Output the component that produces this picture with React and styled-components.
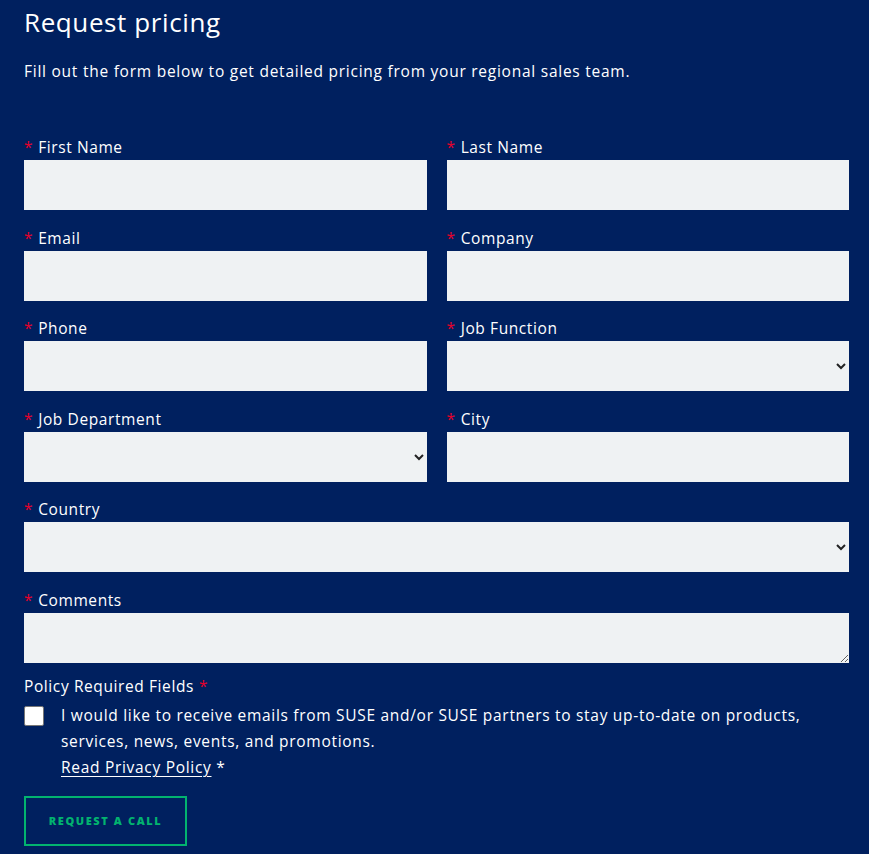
import React from 'react';
import styled, { createGlobalStyle } from 'styled-components';

const GlobalStyle = createGlobalStyle`
  html, body {
    margin: 0;
    padding: 0;
    background: #00205f;
  }
  body {
    font-family: "Open Sans", "Liberation Sans", sans-serif;
    color: #fff;
  }
`;

const Page = styled.div`
  padding: 4px 20px 8px 24px;
`;

const Title = styled.h2`
  margin: 0;
  font-size: 26px;
  font-weight: 500;
  line-height: 36px;
  letter-spacing: 0.6px;
`;

const Intro = styled.p`
  margin: 20px 0 55px;
  font-size: 15.5px;
  line-height: 22px;
  letter-spacing: 0.75px;
`;

const Grid = styled.div`
  display: grid;
  grid-template-columns: 1fr 1fr;
  column-gap: 20px;
  row-gap: 17.6px;
`;

const Field = styled.div`
  display: flex;
  flex-direction: column;
  grid-column: ${(p) => (p.$wide ? '1 / -1' : 'auto')};
`;

const Label = styled.label`
  font-size: 15.5px;
  line-height: 20px;
  margin-bottom: 3px;
  letter-spacing: 0.6px;
`;

const Star = styled.span`
  color: #e4002b;
  margin-right: 5px;
`;

const Input = styled.input`
  box-sizing: border-box;
  height: 50px;
  border: none;
  background: #eff2f3;
  font-size: 15px;
  padding: 0 12px;
  outline: none;
`;

const Select = styled.select`
  box-sizing: border-box;
  height: 50px;
  border: none;
  border-radius: 0;
  background: #eff2f3;
  font-size: 15px;
  padding: 0 8px;
  color: #222;
  outline: none;
`;

const TextArea = styled.textarea`
  box-sizing: border-box;
  height: 50px;
  border: none;
  background: #eff2f3;
  font-size: 15px;
  padding: 8px 12px;
  outline: none;
  display: block;
`;

const PolicyTitle = styled.div`
  margin-top: 12px;
  font-size: 15.5px;
  line-height: 22px;
  letter-spacing: 0.6px;
`;

const PolicyStar = styled.span`
  color: #e4002b;
  margin-left: 5px;
`;

const ConsentRow = styled.div`
  display: flex;
  gap: 17px;
  margin-top: 5px;
`;

const Box = styled.input`
  appearance: none;
  margin: 4px 0 0;
  width: 20px;
  height: 20px;
  flex-shrink: 0;
  background: #fff;
  border: 1px solid #767676;
  border-radius: 2px;
`;

const ConsentText = styled.div`
  font-size: 15.5px;
  line-height: 26px;
  letter-spacing: 0.7px;
`;

const Link = styled.a`
  color: #fff;
  text-decoration: underline;
  text-underline-offset: 3px;
`;

const Button = styled.button`
  margin-top: 16px;
  width: 163px;
  height: 50px;
  background: transparent;
  border: 2px solid #02b36f;
  color: #02b36f;
  font-family: "Open Sans", "Liberation Sans", sans-serif;
  font-weight: 800;
  font-size: 11px;
  letter-spacing: 1.6px;
  text-transform: uppercase;
  cursor: pointer;
`;

const fields = [
  { label: 'First Name', type: 'input' },
  { label: 'Last Name', type: 'input' },
  { label: 'Email', type: 'input' },
  { label: 'Company', type: 'input' },
  { label: 'Phone', type: 'input' },
  { label: 'Job Function', type: 'select' },
  { label: 'Job Department', type: 'select' },
  { label: 'City', type: 'input' },
  { label: 'Country', type: 'select', wide: true },
  { label: 'Comments', type: 'textarea', wide: true },
];

const App = () => {
  return (
    <Page>
      <GlobalStyle />
      <Title>Request pricing</Title>
      <Intro>Fill out the form below to get detailed pricing from your regional sales team.</Intro>
      <Grid>
        {fields.map((f) => (
          <Field key={f.label} $wide={f.wide}>
            <Label>
              <Star>*</Star>
              {f.label}
            </Label>
            {f.type === 'input' && <Input />}
            {f.type === 'select' && (
              <Select defaultValue="">
                <option value=""></option>
              </Select>
            )}
            {f.type === 'textarea' && <TextArea />}
          </Field>
        ))}
      </Grid>
      <PolicyTitle>
        Policy Required Fields<PolicyStar>*</PolicyStar>
      </PolicyTitle>
      <ConsentRow>
        <Box type="checkbox" />
        <ConsentText>
          I would like to receive emails from SUSE and/or SUSE partners to stay up-to-date on products,
          services, news, events, and promotions.
          <br />
          <Link href="#">Read Privacy Policy</Link> *
        </ConsentText>
      </ConsentRow>
      <Button>Request a call</Button>
    </Page>
  );
};

export default App;
